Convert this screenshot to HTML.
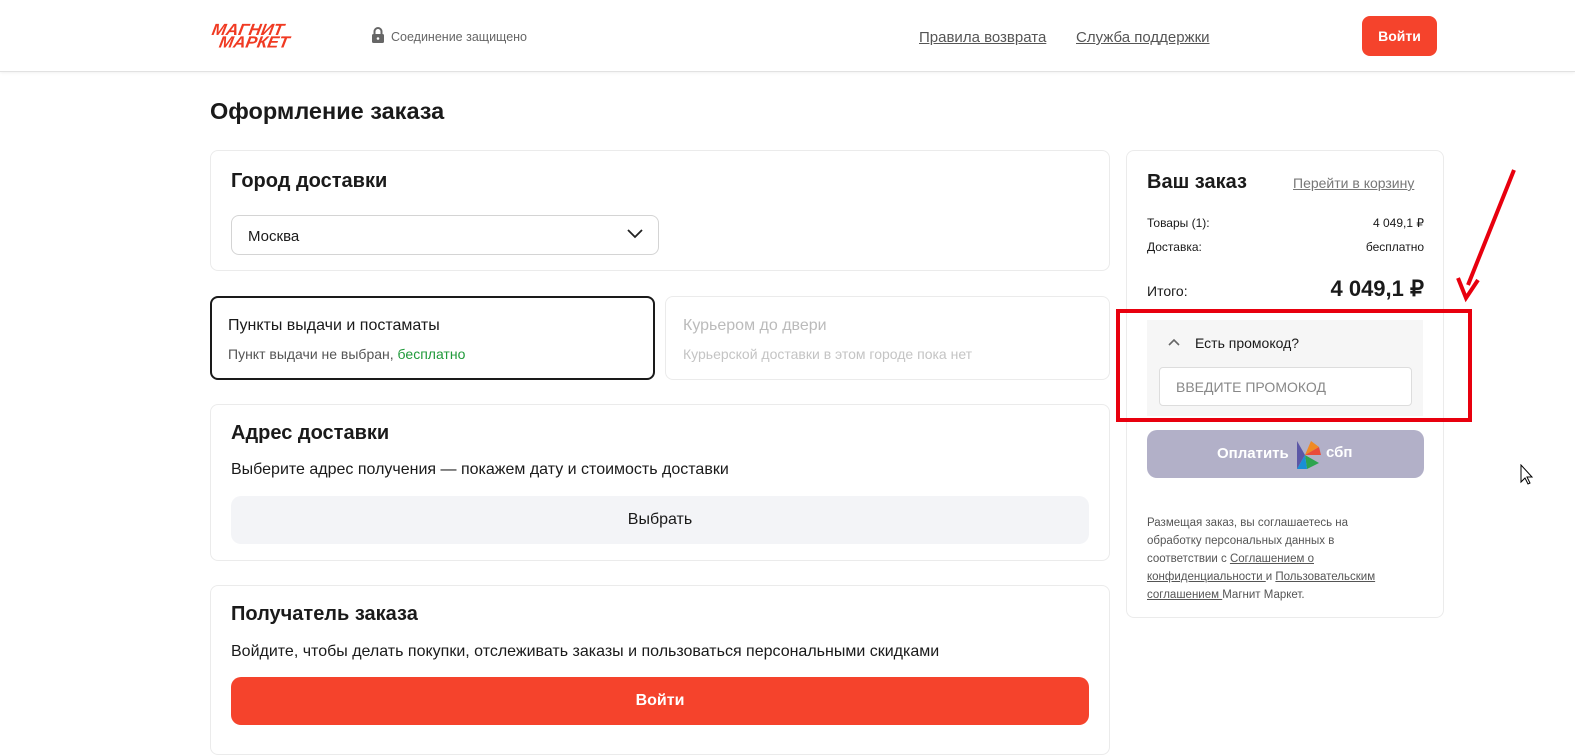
<!DOCTYPE html>
<html><head><meta charset="utf-8">
<style>
*{box-sizing:border-box;margin:0;padding:0}
body{width:1575px;height:756px;background:#fff;font-family:"Liberation Sans",sans-serif;color:#1a1a1a;position:relative;overflow:hidden}
.abs{position:absolute}
.hdr{left:0;top:0;width:1575px;height:72px;border-bottom:1px solid #e2e2e2;box-shadow:0 1px 3px rgba(0,0,0,.06)}
.card{position:absolute;border:1px solid #ebebeb;border-radius:8px;background:#fff}
.u{text-decoration:underline;color:#555}
</style></head><body>
<div class="abs hdr"></div>
<div class="abs" style="left:211px;top:23px;color:#f03a22;font-weight:bold;font-style:italic;font-size:17px;line-height:13px;letter-spacing:0px;transform:skewX(-10deg) scaleY(0.95)">МАГНИТ<br>&nbsp;&nbsp;МАРКЕТ</div>
<svg class="abs" style="left:371px;top:27px" width="14" height="16" viewBox="0 0 14 16"><path d="M3.5 7V4.5a3.5 3.5 0 0 1 7 0V7" stroke="#666" stroke-width="2" fill="none"/><rect x="1" y="7" width="12" height="9" rx="1.5" fill="#666"/><circle cx="7" cy="11.5" r="1.3" fill="#fff"/></svg>
<div class="abs" style="left:391px;top:30px;font-size:12.5px;color:#666">Соединение защищено</div>
<div class="abs u" style="left:919px;top:29px;font-size:15px">Правила возврата</div>
<div class="abs u" style="left:1076px;top:29px;font-size:15px">Служба поддержки</div>
<div class="abs" style="left:1362px;top:16px;width:75px;height:40px;background:#f5432c;border-radius:8px;color:#fff;font-weight:bold;font-size:14px;text-align:center;line-height:40px">Войти</div>

<div class="abs" style="left:210px;top:98px;font-size:23.5px;font-weight:bold">Оформление заказа</div>

<div class="card" style="left:210px;top:150px;width:900px;height:121px"></div>
<div class="abs" style="left:231px;top:170px;font-size:20px;font-weight:bold">Город доставки</div>
<div class="abs" style="left:231px;top:215px;width:428px;height:40px;border:1px solid #d4d4d4;border-radius:8px;font-size:15px;padding:12px 16px">Москва</div>
<svg class="abs" style="left:627px;top:229px" width="16" height="10"><path d="M1 1l7 7 7-7" stroke="#222" stroke-width="1.8" fill="none"/></svg>

<div class="abs" style="left:210px;top:296px;width:445px;height:84px;border:2px solid #1a1a1a;border-radius:8px"></div>
<div class="abs" style="left:228px;top:317px;font-size:16px">Пункты выдачи и постаматы</div>
<div class="abs" style="left:228px;top:346px;font-size:14px;color:#555">Пункт выдачи не выбран, <span style="color:#1f9a3a">бесплатно</span></div>
<div class="card" style="left:665px;top:296px;width:445px;height:84px"></div>
<div class="abs" style="left:683px;top:317px;font-size:16px;color:#bbb">Курьером до двери</div>
<div class="abs" style="left:683px;top:346px;font-size:14px;color:#c4c4c4">Курьерской доставки в этом городе пока нет</div>

<div class="card" style="left:210px;top:404px;width:900px;height:157px"></div>
<div class="abs" style="left:231px;top:422px;font-size:20px;font-weight:bold">Адрес доставки</div>
<div class="abs" style="left:231px;top:461px;font-size:16px">Выберите адрес получения — покажем дату и стоимость доставки</div>
<div class="abs" style="left:231px;top:496px;width:858px;height:48px;background:#f3f4f7;border-radius:10px;text-align:center;line-height:48px;font-size:16px">Выбрать</div>

<div class="card" style="left:210px;top:585px;width:900px;height:170px"></div>
<div class="abs" style="left:231px;top:603px;font-size:20px;font-weight:bold">Получатель заказа</div>
<div class="abs" style="left:231px;top:643px;font-size:16px">Войдите, чтобы делать покупки, отслеживать заказы и пользоваться персональными скидками</div>
<div class="abs" style="left:231px;top:677px;width:858px;height:48px;background:#f5432c;border-radius:10px;text-align:center;line-height:48px;font-size:16px;font-weight:bold;color:#fff">Войти</div>

<div class="card" style="left:1126px;top:150px;width:318px;height:468px"></div>
<div class="abs" style="left:1147px;top:171px;font-size:20px;font-weight:bold">Ваш заказ</div>
<div class="abs u" style="left:1293px;top:175px;font-size:14px;color:#777">Перейти в корзину</div>
<div class="abs" style="left:1147px;top:216px;font-size:12px">Товары (1):</div>
<div class="abs" style="left:1300px;top:216px;width:124px;text-align:right;font-size:12px">4 049,1 ₽</div>
<div class="abs" style="left:1147px;top:240px;font-size:12px">Доставка:</div>
<div class="abs" style="left:1300px;top:240px;width:124px;text-align:right;font-size:12px">бесплатно</div>
<div class="abs" style="left:1147px;top:283px;font-size:14px">Итого:</div>
<div class="abs" style="left:1280px;top:276px;width:144px;text-align:right;font-size:22px;font-weight:bold">4 049,1 ₽</div>

<div class="abs" style="left:1147px;top:320px;width:276px;height:96px;background:#f6f6f6"></div>
<svg class="abs" style="left:1168px;top:338px" width="12" height="8"><path d="M1 7l5-5 5 5" stroke="#666" stroke-width="1.6" fill="none"/></svg>
<div class="abs" style="left:1195px;top:335px;font-size:14px">Есть промокод?</div>
<div class="abs" style="left:1159px;top:367px;width:253px;height:39px;background:#fff;border:1px solid #ddd;border-radius:4px;font-size:14px;color:#888;padding:11px 16px">ВВЕДИТЕ ПРОМОКОД</div>
<div class="abs" style="left:1116px;top:309px;width:356px;height:113px;border:4px solid #e8000e"></div>

<div class="abs" style="left:1147px;top:430px;width:277px;height:48px;background:#b2b0c8;border-radius:10px"></div>
<div class="abs" style="left:1217px;top:445px;font-size:15px;font-weight:bold;color:#fff">Оплатить</div>
<svg class="abs" style="left:1295px;top:439px" width="28" height="32" viewBox="0 0 28 32"><path d="M2 2l8 14-8 14z" fill="#5b57a6"/><path d="M10 16L24 8 16 2z" fill="#f08a24"/><path d="M10 16L24 8l2 8z" fill="#e94b3c"/><path d="M10 16l14 8-12 6z" fill="#2ea44f"/><path d="M2 30l8-14 2 14z" fill="#1a8fd6"/></svg>
<div class="abs" style="left:1326px;top:444px;font-size:15px;font-weight:bold;color:#fff">сбп</div>

<div class="abs" style="left:1147px;top:514px;width:290px;font-size:11.5px;line-height:18px;color:#555;white-space:nowrap">Размещая заказ, вы соглашаетесь на<br>обработку персональных данных в<br>соответствии с <span class="u">Соглашением о</span><br><span class="u">конфиденциальности </span>и <span class="u">Пользовательским</span><br><span class="u">соглашением </span>Магнит Маркет.</div>

<svg class="abs" style="left:1450px;top:160px" width="80" height="150"><line x1="64" y1="10" x2="18" y2="125" stroke="#e8000e" stroke-width="4"/><path d="M8 118l8 20 12-18" stroke="#e8000e" stroke-width="4" fill="none"/></svg>
<svg class="abs" style="left:1520px;top:464px" width="14" height="22"><path d="M1 1v17l4-4 3 6 2-1-3-6h5z" fill="#fff" stroke="#000" stroke-width="1"/></svg>
</body></html>
